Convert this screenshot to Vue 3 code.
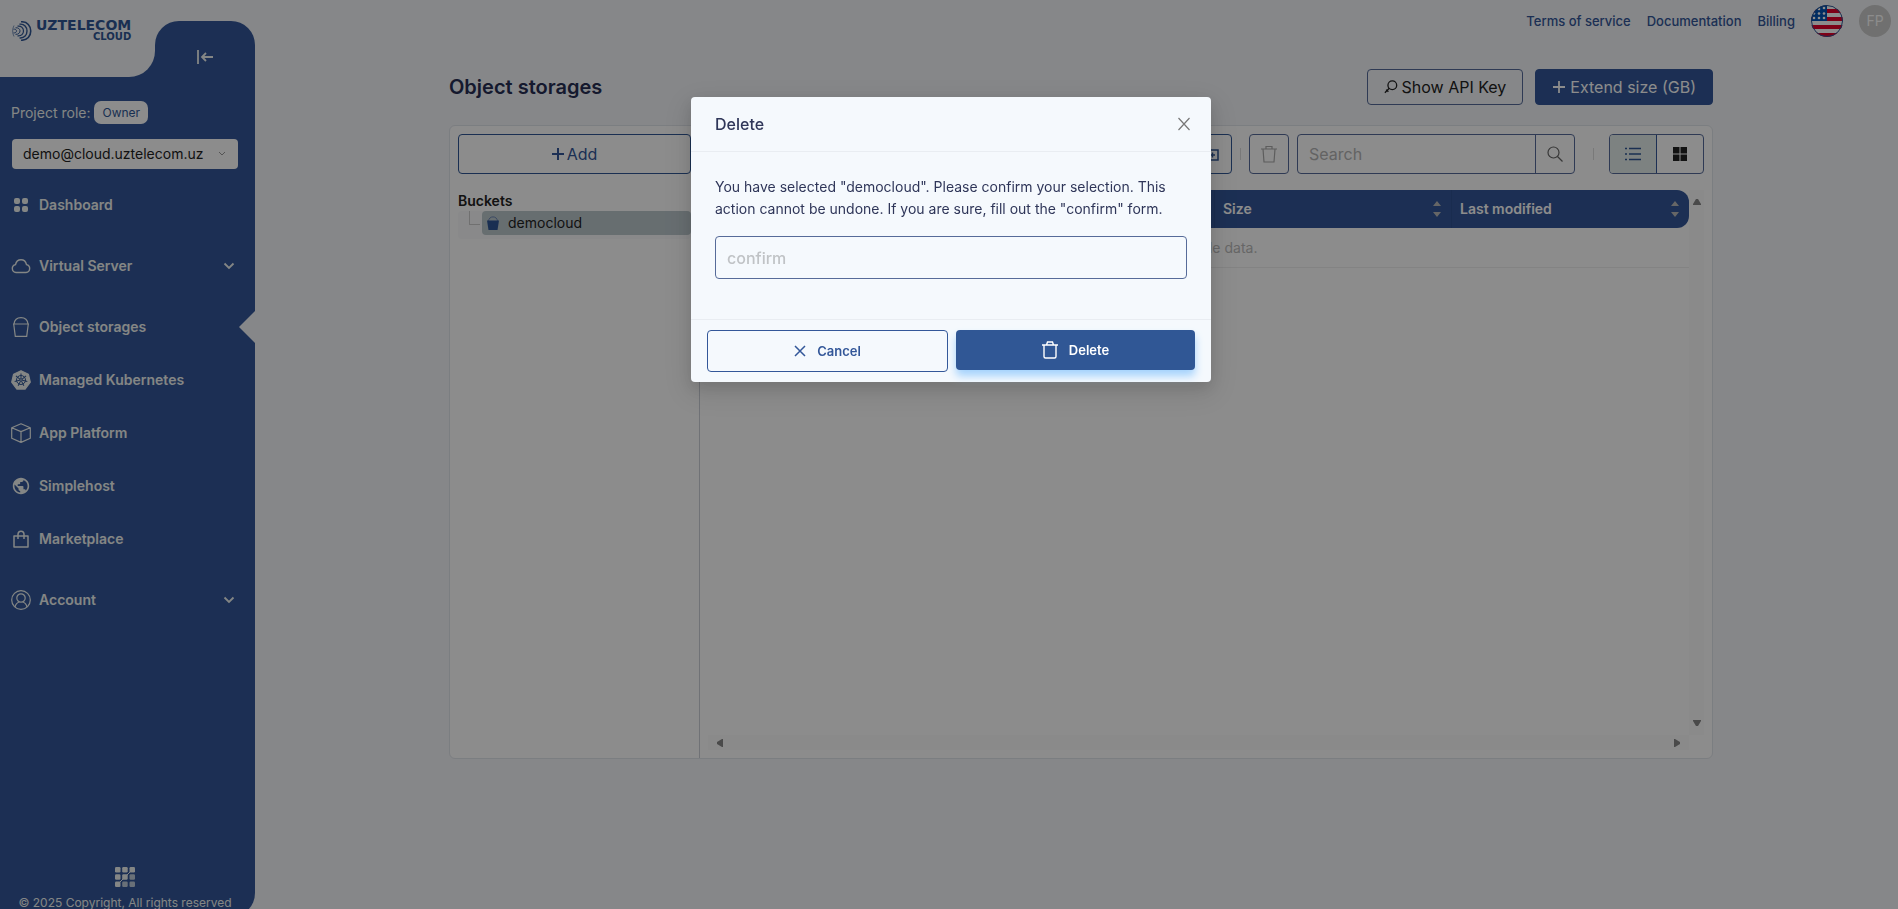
<script setup>
    import { ref } from "vue";

    //sidebar items
    const menu = [
      { name: "Dashboard", icon: "dashboard" },
      { name: "Virtual Server", icon: "cloud", group: true },
      { name: "Object storages", icon: "bucket", active: true },
      { name: "Managed Kubernetes", icon: "kubernetes" },
      { name: "App Platform", icon: "box" },
      { name: "Simplehost", icon: "globe" },
      { name: "Marketplace", icon: "bag" },
      { name: "Account", icon: "user", group: true }
    ];

    const links = ["Terms of service", "Documentation", "Billing"];
    const columns = ["Name", "Size", "Last modified"];
    const spokes = [0, 51, 103, 154, 206, 257, 309];

    const project = ref("demo@cloud.uztelecom.uz");
    const search = ref("");
    const confirmText = ref("");
    const isVisible = ref(true);

    //close modal
    const closeModal = () => {
      isVisible.value = false;
      confirmText.value = "";
    };

    //delete bucket
    const submit = () => {
      if (confirmText.value.trim() === "confirm") {
        closeModal();
      }
    };
</script>

<template>
  <div class="layout">
    <!--sidebar-->
    <aside class="sidebar">
      <div class="sidebar-head">
        <a href="#" class="logo">
          <svg class="logo-mark" viewBox="0 0 20 20" fill="none" stroke="#305795">
            <path d="M9 .8C22 0 22 20 9 19.200" stroke-width="1.600" />
            <path d="M7.500 3.200C17.500 2 17.500 18 7.500 16.900" stroke-width="1.400" />
            <path d="M5.500 5.200C13.500 4 13.500 16 5.500 14.900" stroke-width="1.200" />
            <path d="M3.500 6.800C9.500 6 9.500 14 3.500 13.300" stroke-width="1" />
            <path d="M1.500 8.200C5.500 7.500 5.500 12.500 1.500 11.900" stroke-width=".9" />
            <path d="M2 4.500C.2 8 .2 12 2 15.500" stroke-width=".6" />
          </svg>
          <span class="logo-text">
            <b>UZTELECOM</b>
            <small>CLOUD</small>
          </span>
        </a>
        <div class="head-right">
          <button class="collapse" aria-label="Collapse menu">
            <svg viewBox="0 0 18 16" fill="none" stroke="currentColor" stroke-width="1.800">
              <path d="M2 1v14M17 8H6M10 4L6 8l4 4" />
            </svg>
          </button>
        </div>
      </div>

      <div class="role">Project role: <span class="badge">Owner</span></div>
      <div class="project">
        <select v-model="project" aria-label="Project">
          <option>demo@cloud.uztelecom.uz</option>
        </select>
        <svg viewBox="0 0 8 6" fill="none" stroke="#999"><path d="M1 1l3 3 3-3" /></svg>
      </div>

      <nav>
        <a v-for="item in menu" :key="item.name" href="#" class="nav-item" :class="{ group: item.group, active: item.active }">
          <svg class="nav-icon" viewBox="0 0 20 20" fill="none" stroke="currentColor" stroke-width="1.200">
            <g v-if="item.icon === 'dashboard'" fill="currentColor" stroke="none">
              <rect x="3" y="3" width="6" height="6" rx="2" />
              <rect x="11" y="3" width="6" height="6" rx="2" />
              <rect x="3" y="11" width="6" height="6" rx="2" />
              <rect x="11" y="11" width="6" height="6" rx="2" />
            </g>
            <path v-else-if="item.icon === 'cloud'" stroke-width="1.400" d="M5 16.500a4 4 0 0 1-.5-7.900C5.200 5.400 7.300 3.800 10 3.800s4.800 1.600 5.500 4.800a4 4 0 0 1-.5 7.900z" />
            <path v-else-if="item.icon === 'bucket'" d="M2 7h16M2.700 7l1.600 12.400h11.400L17.300 7M3 7C3.500 3 6 .7 10 .7S16.500 3 17 7" />
            <g v-else-if="item.icon === 'kubernetes'">
              <path fill="currentColor" stroke-linejoin="round" d="M10 .7l7.400 3.500 1.900 8-5.200 6.900H5.900L.7 12.200l1.900-8z" />
              <g stroke="#305795" stroke-width="1">
                <circle cx="10" cy="10" r="4.500" />
                <circle cx="10" cy="10" r="1.300" />
                <path v-for="a in spokes" :key="a" d="M10 8.500V3.500" :transform="`rotate(${a} 10 10)`" />
              </g>
            </g>
            <path v-else-if="item.icon === 'box'" stroke-linejoin="round" d="M10 .8l9.300 4v10.500L10 19.400.7 15.300V4.800zM.7 4.800L10 8.600l9.300-3.800M10 8.600v10.800" />
            <path v-else-if="item.icon === 'globe'" fill="currentColor" stroke="none" transform="translate(.16 .16) scale(.82)" d="M12 2C6.480 2 2 6.480 2 12s4.480 10 10 10 10-4.480 10-10S17.520 2 12 2zm-1 17.930c-3.950-.49-7-3.850-7-7.930 0-.62.08-1.210.21-1.790L9 15v1c0 1.100.9 2 2 2v1.930zm6.900-2.540c-.26-.81-1-1.390-1.900-1.390h-1v-3c0-.55-.45-1-1-1H8v-2h2c.55 0 1-.45 1-1V7h2c1.100 0 2-.9 2-2v-.41c2.930 1.190 5 4.060 5 7.410 0 2.080-.8 3.970-2.100 5.390z" />
            <path v-else-if="item.icon === 'bag'" stroke-width="1.500" stroke-linejoin="round" d="M3 7h14v11H3zM7 10V5.500c0-4.500 6-4.500 6 0V10" />
            <g v-else>
              <circle cx="10" cy="10" r="9.300" />
              <circle cx="10" cy="8" r="4.200" />
              <path d="M4 17c.8-3 2.500-4.600 4.300-5M16 17c-.8-3-2.500-4.600-4.300-5" />
            </g>
          </svg>
          <span>{{ item.name }}</span>
          <svg v-if="item.group" class="chevron" viewBox="0 0 12 8" fill="none" stroke="currentColor" stroke-width="1.800"><path d="M1.500 1.500L6 6l4.500-4.500" /></svg>
        </a>
      </nav>

      <footer>
        <svg viewBox="0 0 20 20" fill="currentColor">
          <rect width="5.500" height="5.500" rx="1.200" />
          <rect x="7.200" width="5.500" height="5.500" rx="1.200" />
          <rect x="14.500" width="5.500" height="5.500" rx="1.200" />
          <rect y="7.200" width="5.500" height="5.500" rx="1.200" />
          <rect x="7.200" y="7.200" width="5.500" height="5.500" rx="1.200" />
          <rect x="14.500" y="7.200" width="5.500" height="5.500" rx="1.200" opacity=".75" />
          <rect y="14.500" width="5.500" height="5.500" rx="1.200" />
          <rect x="7.200" y="14.500" width="5.500" height="5.500" rx="1.200" opacity=".75" />
          <rect x="14.500" y="14.500" width="5.500" height="5.500" rx="1.200" opacity=".75" />
          <path d="M4 16L16 4" stroke="currentColor" />
        </svg>
        <p>© 2025 Copyright, All rights reserved</p>
      </footer>
    </aside>

    <div class="page">
      <!--top links-->
      <header class="topbar">
        <a v-for="link in links" :key="link" href="#">{{ link }}</a>
        <button class="flag" aria-label="Language">
          <svg viewBox="0 0 32 32">
            <defs><clipPath id="round"><circle cx="16" cy="16" r="16" /></clipPath></defs>
            <g clip-path="url(#round)">
              <rect width="32" height="32" fill="#fff" />
              <path d="M0 6h32M0 14h32M0 22h32M0 30h32" stroke="#e4002b" stroke-width="4" />
              <rect width="16" height="16" fill="#0052b4" />
              <g fill="#fff">
                <circle cx="13" cy="3" r="1.300" /><circle cx="8" cy="4" r="1.300" />
                <circle cx="3" cy="8.500" r="1.300" /><circle cx="8" cy="8.500" r="1.300" /><circle cx="13" cy="8.500" r="1.300" />
                <circle cx="3" cy="13" r="1.300" /><circle cx="8" cy="13" r="1.300" /><circle cx="13" cy="13" r="1.300" />
              </g>
            </g>
            <circle cx="16" cy="16" r="15.500" fill="none" stroke="#305795" />
          </svg>
        </button>
        <button class="avatar">FP</button>
      </header>

      <main>
        <div class="title-row">
          <h1>Object storages</h1>
          <button class="btn-key">
            <svg viewBox="0 0 16 16" fill="none" stroke="currentColor" stroke-width="1.500"><circle cx="9.500" cy="6" r="5" /><path d="M6 9.500L1 14.500M2.500 11l2.500 2.500" /></svg>
            Show API Key
          </button>
          <button class="btn-extend">
            <svg viewBox="0 0 14 14" stroke="currentColor" stroke-width="1.800"><path d="M7 1v12M1 7h12" /></svg>
            Extend size (GB)
          </button>
        </div>

        <section class="card">
          <!--buckets tree-->
          <div class="tree">
            <button class="btn-add">
              <svg viewBox="0 0 12 12" stroke="currentColor" stroke-width="2"><path d="M6 0v12M0 6h12" /></svg>Add
            </button>
            <h2>Buckets</h2>
            <div class="branch">
              <span class="branch-line"></span>
              <button class="node">
                <svg viewBox="0 0 12 14"><path d="M1.500 5C2-.5 10-.5 10.500 5" fill="none" stroke="#6c86b4" /><path d="M0 4.500h12L10.500 14h-9z" fill="#305795" /></svg>
                democloud
              </button>
            </div>
          </div>

          <!--files-->
          <div class="files">
            <div class="toolbar">
              <button class="tool blue" aria-label="Add folder">
                <svg viewBox="0 0 20 16" fill="none" stroke="currentColor" stroke-width="1.500"><path d="M1 2h6l2 2h7v10H1zM8 9h5M10.500 6.500v5" /></svg>
              </button>
              <i class="split"></i>
              <button class="tool" aria-label="Remove" disabled>
                <svg viewBox="0 0 16 18" fill="none" stroke="#aaa" stroke-width="1.200"><path d="M0 4h16M5 4V1.500h6V4M2 4l1 13h10l1-13" /></svg>
              </button>
              <div class="search">
                <input v-model="search" type="text" placeholder="Search" aria-label="Search" />
                <button aria-label="Find">
                  <svg viewBox="0 0 16 16" fill="none" stroke="#666" stroke-width="1.200"><circle cx="6.500" cy="6.500" r="5.500" /><path d="M10.500 10.500l5 5" /></svg>
                </button>
              </div>
              <i class="split far"></i>
              <div class="view">
                <button class="on" aria-label="List">
                  <svg viewBox="0 0 16 14" fill="none" stroke="#305795" stroke-width="1.300"><path d="M0 1.500h2M4 1.500h12M0 7h2M4 7h12M0 12.500h2M4 12.500h12" /></svg>
                </button>
                <button aria-label="Grid">
                  <svg viewBox="0 0 16 14" fill="#222"><path d="M1 0h6.500v6.500H1zM8.500 0H15v6.500H8.500zM1 7.500h6.500V14H1zM8.500 7.500H15V14H8.500z" /></svg>
                </button>
              </div>
            </div>

            <div class="scroll-box">
              <table>
                <thead>
                  <tr>
                    <th v-for="col in columns" :key="col">
                      <div class="th">
                        {{ col }}
                        <svg viewBox="0 0 8 16" fill="#bbb"><path d="M4 0l4 5H0zM4 16l4-5H0z" /></svg>
                      </div>
                    </th>
                  </tr>
                </thead>
                <tbody>
                  <tr>
                    <td colspan="3">No available data.</td>
                  </tr>
                </tbody>
              </table>
              <div class="bar-v">
                <svg viewBox="0 0 10 8"><path d="M4 1h2l3 5v1H1V6z" /></svg>
                <svg viewBox="0 0 10 8"><path d="M4 7h2l3-5V1H1v1z" /></svg>
              </div>
              <div class="bar-h">
                <svg viewBox="0 0 8 10"><path d="M1 4v2l5 3h1V1H6z" /></svg>
                <svg viewBox="0 0 8 10"><path d="M7 4v2L2 9H1V1h1z" /></svg>
              </div>
            </div>
          </div>
        </section>
      </main>
    </div>

    <!--modal-->
    <div v-if="isVisible" class="modal-overlay" @click.self="closeModal">
      <div class="modal-content" role="dialog" aria-label="Delete">
        <div class="modal-head">
          <h3>Delete</h3>
          <button aria-label="Close" @click="closeModal">
            <svg viewBox="0 0 12 14" fill="none" stroke="#777" stroke-width="1.200"><path d="M.5 1l11 12M11.500 1L.5 13" /></svg>
          </button>
        </div>
        <div class="modal-body">
          <label for="confirm">You have selected "democloud". Please confirm your selection. This action cannot be undone. If you are sure, fill out the "confirm" form.</label>
          <input id="confirm" v-model="confirmText" type="text" placeholder="confirm" />
        </div>
        <div class="modal-buttons">
          <button class="cancel" @click="closeModal">
            <svg viewBox="0 0 12 12" fill="none" stroke="currentColor" stroke-width="1.500"><path d="M1 1l10 10M11 1L1 11" /></svg>
            Cancel
          </button>
          <button class="delete" @click="submit">
            <svg viewBox="0 0 16 18" fill="none" stroke="currentColor" stroke-width="1.400"><path d="M0 4h16M4.500 4l1-3h5l1 3M2 4v11.500c0 1 .5 1.500 1.500 1.500h9c1 0 1.500-.5 1.500-1.500V4" /></svg>
            Delete
          </button>
        </div>
      </div>
    </div>
  </div>
</template>

<style>
    body {
    background-color: #f4f6f9;
    }
</style>

<style scoped>
    .layout {
    display: flex;
    height: 100vh;
    overflow: hidden;
    background-color: #f4f6f9;
    font-family: Inter, "Liberation Sans", sans-serif;
    font-size: 14px;
    line-height: 20px;
    color: #222;
    }

    .layout *, .layout *::before, .layout *::after {
    box-sizing: border-box;
    }

    button, input, select {
    font: inherit;
    color: inherit;
    margin: 0;
    padding: 0;
    border: 0;
    background: none;
    }

    button {
    display: flex;
    justify-content: center;
    align-items: center;
    cursor: pointer;
    }

    a {
    text-decoration: none;
    }

    h1, h2, h3, p {
    margin: 0;
    }

    svg {
    display: block;
    flex: none;
    }

    /* sidebar */
    .sidebar {
    display: flex;
    flex-direction: column;
    flex: none;
    width: 255px;
    height: calc(100vh + 8px);
    background-color: #335799;
    border-bottom-right-radius: 24px;
    color: #f0f4f2;
    }

    .sidebar-head {
    display: flex;
    height: 77px;
    }

    .logo {
    display: flex;
    gap: 4px;
    width: 155px;
    padding: 18px 0 0 12px;
    background-color: #f4f6f9;
    border-bottom-right-radius: 26px;
    color: #305795;
    }

    .logo-mark {
    width: 20px;
    height: 20px;
    margin-top: 3px;
    }

    .logo-text {
    display: flex;
    flex-direction: column;
    align-items: flex-end;
    font-family: "DejaVu Sans", sans-serif;
    }

    .logo-text b {
    font-size: 14px;
    line-height: 14px;
    }

    .logo-text small {
    font-size: 10px;
    line-height: 10px;
    font-weight: 700;
    }

    .head-right {
    flex: 1;
    padding-top: 21px;
    background-color: #f4f6f9;
    }

    .collapse {
    width: 100%;
    height: 56px;
    padding-top: 16px;
    background-color: #335799;
    border-radius: 24px 24px 0 0;
    }

    .collapse svg {
    width: 18px;
    height: 16px;
    }

    .role {
    display: flex;
    align-items: center;
    gap: 4px;
    margin: 24px 0 15px 11px;
    }

    .badge {
    padding: 2px 8px 1px;
    background-color: #fff;
    border-radius: 7px;
    font-size: 12px;
    color: #305795;
    }

    .project {
    display: grid;
    align-items: center;
    margin: 0 17px 9px 12px;
    }

    .project select, .project svg {
    grid-area: 1 / 1;
    }

    .project select {
    appearance: none;
    width: 100%;
    height: 30px;
    padding: 0 11px;
    background-color: #fff;
    border-radius: 4px;
    color: #222;
    }

    .project svg {
    justify-self: end;
    width: 8px;
    height: 6px;
    margin-right: 12px;
    }

    .nav-item {
    display: flex;
    align-items: center;
    gap: 8px;
    position: relative;
    height: 53px;
    padding: 0 20px 0 11px;
    font-weight: 600;
    color: #f0f4f2;
    }

    .nav-item.group {
    margin: 8px 0;
    }

    .nav-item.active::after {
    content: "";
    position: absolute;
    right: 0;
    border: 16px solid transparent;
    border-left: 0;
    border-right-color: #f4f6f9;
    }

    .nav-icon {
    width: 20px;
    height: 20px;
    }

    .chevron {
    width: 12px;
    height: 8px;
    margin-left: auto;
    }

    footer {
    display: flex;
    flex-direction: column;
    align-items: center;
    gap: 6px;
    margin-top: auto;
    padding: 0 5px 4px 0;
    font-size: 12px;
    }

    footer svg {
    width: 20px;
    height: 20px;
    }

    /* page */
    .page {
    flex: 1;
    min-width: 0;
    }

    .topbar {
    display: flex;
    justify-content: flex-end;
    align-items: center;
    gap: 16px;
    height: 42px;
    padding: 0 7px;
    }

    .topbar a {
    font-size: 13px;
    font-weight: 500;
    color: #335799;
    }

    .flag svg, .avatar {
    width: 32px;
    height: 32px;
    }

    .avatar {
    border-radius: 50%;
    background-color: #ccc;
    color: #fff;
    }

    main {
    max-width: 1273px;
    margin: 0 auto;
    padding: 27px 0 0 9px;
    }

    .title-row {
    display: flex;
    align-items: center;
    gap: 12px;
    margin-bottom: 20px;
    }

    h1 {
    flex: 1;
    font-size: 20px;
    line-height: 24px;
    font-weight: 600;
    color: #272e54;
    }

    .btn-key, .btn-extend {
    gap: 4px;
    height: 36px;
    padding: 0 16px;
    border: 1px solid #566b99;
    border-radius: 4px;
    font-size: 16px;
    }

    .btn-extend {
    border-color: #335799;
    background-color: #335799;
    color: #fff;
    }

    .btn-key svg, .btn-extend svg {
    width: 14px;
    height: 14px;
    }

    .card {
    display: flex;
    height: calc(100vh - 275px);
    border: 1px solid #e1e5eb;
    border-radius: 6px;
    background-color: #fff;
    }

    .tree {
    flex: none;
    width: 250px;
    padding: 8px;
    border-right: 1px solid #ccd0d8;
    }

    .btn-add {
    gap: 3px;
    width: 100%;
    height: 40px;
    border: 1px solid #305795;
    border-radius: 4px;
    font-size: 16px;
    color: #335799;
    }

    .btn-add svg {
    width: 12px;
    height: 12px;
    }

    h2 {
    margin-top: 17px;
    font-size: 14px;
    line-height: 20px;
    font-weight: 600;
    }

    .branch {
    display: flex;
    align-items: flex-start;
    height: 28px;
    padding-left: 11px;
    background-color: #f9fafc;
    border-radius: 4px;
    }

    .branch-line {
    width: 11px;
    height: 14px;
    margin-right: 2px;
    border: solid #ccc;
    border-width: 0 0 1px 1px;
    }

    .node {
    flex: 1;
    justify-content: flex-start;
    gap: 9px;
    height: 24px;
    padding-left: 5px;
    background-color: #bcc8cd;
    border-radius: 4px;
    }

    .node svg {
    width: 12px;
    height: 14px;
    }

    .files {
    display: flex;
    flex-direction: column;
    flex: 1;
    min-width: 0;
    padding: 8px;
    }

    .toolbar {
    display: flex;
    justify-content: flex-end;
    align-items: center;
    gap: 8px;
    margin-bottom: 16px;
    }

    .tool {
    width: 40px;
    height: 40px;
    border: 1px solid #566b99;
    border-radius: 4px;
    }

    .tool.blue {
    border-color: #305795;
    color: #305795;
    }

    .tool svg {
    width: 16px;
    height: 18px;
    }

    .tool.blue svg {
    width: 20px;
    height: 16px;
    }

    .split {
    width: 1px;
    height: 12px;
    background-color: #ddd;
    }

    .split.far {
    margin: 0 7px 0 10px;
    }

    .search {
    display: flex;
    width: 278px;
    height: 40px;
    border: 1px solid #566b99;
    border-radius: 4px;
    }

    .search input {
    flex: 1;
    min-width: 0;
    padding: 0 11px;
    border-right: 1px solid #566b99;
    font-size: 16px;
    }

    .search input::placeholder {
    color: #b4b4b4;
    }

    .search button {
    width: 38px;
    }

    .search svg {
    width: 16px;
    height: 16px;
    }

    .view {
    display: flex;
    width: 95px;
    height: 40px;
    overflow: hidden;
    border: 1px solid #566b99;
    border-radius: 4px;
    }

    .view button {
    flex: 1;
    }

    .view .on {
    border-right: 1px solid #335799;
    background-color: #e3edeb;
    }

    .view svg {
    width: 16px;
    height: 14px;
    }

    .scroll-box {
    display: grid;
    grid-template-columns: 1fr 15px;
    grid-template-rows: 1fr 15px;
    flex: 1;
    }

    table {
    align-self: start;
    width: 100%;
    table-layout: fixed;
    border-collapse: separate;
    border-spacing: 0;
    }

    th {
    width: 237px;
    height: 38px;
    padding: 0 10px 0 8px;
    background-color: #335799;
    border-right: 1px solid #2f5190;
    text-align: left;
    font-weight: 600;
    color: #fff;
    }

    th:first-child {
    width: auto;
    border-top-left-radius: 12px;
    border-bottom-left-radius: 12px;
    }

    th:last-child {
    border-right: 0;
    border-top-right-radius: 12px;
    border-bottom-right-radius: 12px;
    }

    .th {
    display: flex;
    justify-content: space-between;
    align-items: center;
    }

    .th svg {
    width: 8px;
    height: 16px;
    }

    td {
    height: 40px;
    padding: 0;
    border-bottom: 1px solid #eee;
    text-align: center;
    color: #bbb;
    }

    .bar-v, .bar-h {
    display: flex;
    justify-content: space-between;
    align-items: center;
    background-color: #fcfcfc;
    fill: #888;
    }

    .bar-v {
    flex-direction: column;
    padding: 8px 0;
    }

    .bar-h {
    padding: 0 8px;
    }

    .bar-v svg {
    width: 10px;
    height: 8px;
    }

    .bar-h svg {
    width: 8px;
    height: 10px;
    }

    /* modal */
    .modal-overlay {
    position: fixed;
    inset: 0;
    display: flex;
    justify-content: center;
    align-items: flex-start;
    padding: 97px 0 0 4px;
    background-color: rgba(0, 0, 0, 0.45);
    z-index: 9999;
    }

    .modal-content {
    width: 520px;
    background-color: #f5f9fd;
    border-radius: 4px;
    box-shadow: 0 9px 28px 8px rgba(0, 0, 0, 0.08), 0 6px 16px rgba(0, 0, 0, 0.12);
    color: #2f3659;
    }

    .modal-head {
    display: flex;
    justify-content: space-between;
    align-items: center;
    height: 55px;
    padding: 0 21px 0 24px;
    border-bottom: 1px solid #e9edf2;
    }

    .modal-head h3 {
    font-size: 16px;
    line-height: 22px;
    font-weight: 500;
    }

    .modal-head svg {
    width: 12px;
    height: 14px;
    }

    .modal-body {
    padding: 24px 24px 40px;
    }

    .modal-body label {
    display: block;
    margin-bottom: 16px;
    line-height: 22px;
    }

    .modal-body input {
    width: 100%;
    height: 43px;
    padding: 0 11px;
    border: 1px solid #566b99;
    border-radius: 4px;
    font-size: 16px;
    font-weight: 500;
    }

    .modal-body input::placeholder {
    color: #c0c3c6;
    }

    .modal-buttons {
    display: flex;
    align-items: flex-start;
    gap: 8px;
    padding: 10px 16px;
    border-top: 1px solid #e9edf2;
    }

    .modal-buttons button {
    flex: 1;
    gap: 11px;
    border-radius: 4px;
    font-size: 13px;
    font-weight: 600;
    }

    .modal-buttons .cancel {
    height: 42px;
    border: 1px solid #335799;
    color: #335799;
    }

    .modal-buttons .delete {
    height: 40px;
    background-color: #305795;
    box-shadow: 0 6px 8px #a4d2fc;
    color: #fff;
    }

    .cancel svg {
    width: 12px;
    height: 12px;
    }

    .delete svg {
    width: 16px;
    height: 18px;
    }
</style>
